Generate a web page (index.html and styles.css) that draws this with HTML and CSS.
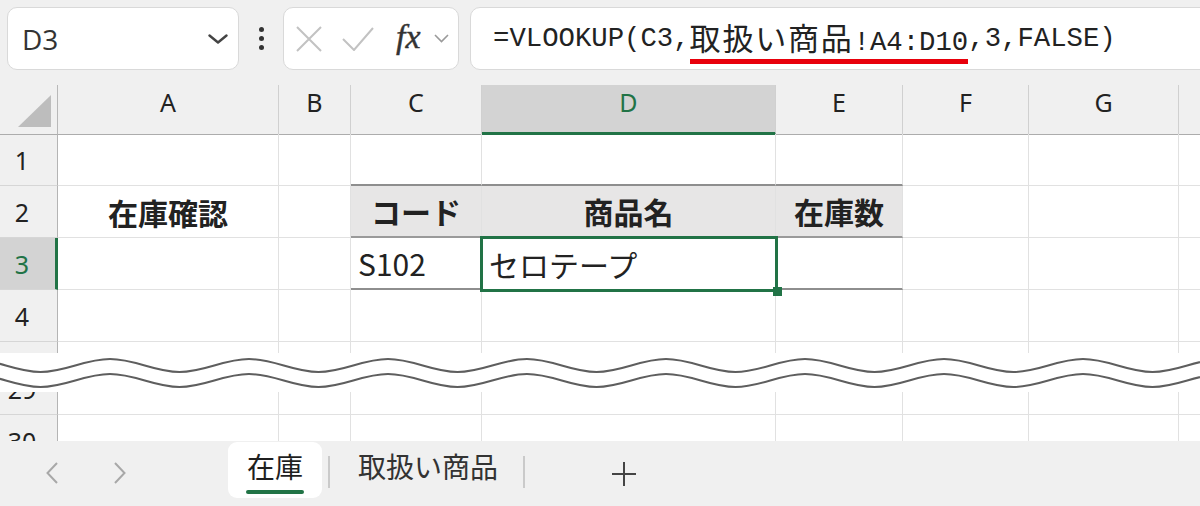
FILE: index.html
```
<!DOCTYPE html>
<html lang="ja">
<head>
  <meta charset="UTF-8">
  <meta name="viewport" content="width=device-width, initial-scale=1.0">
  <title>在庫</title>
  <link rel="stylesheet" href="styles.css">
</head>
<body>

  <div class="toolbar">
    <div class="name-box">
      <span>D3</span>
      <svg class="name-drop" width="20" height="10" viewBox="0 0 20 10"><path d="M1.5 1.5 L10 8.5 L18.5 1.5" fill="none" stroke="#444" stroke-width="2.4" stroke-linecap="round" stroke-linejoin="round"/></svg>
    </div>
    <div class="more">
      <i></i><i></i><i></i>
    </div>
    <div class="fx-box">
      <svg class="fx-cancel" width="26" height="26" viewBox="0 0 26 26"><path d="M1 1 L25 25 M25 1 L1 25" stroke="#c2c2c2" stroke-width="2"/></svg>
      <svg class="fx-enter" width="32" height="24" viewBox="0 0 32 24"><path d="M1 12 L12 23 L31 1" fill="none" stroke="#c2c2c2" stroke-width="2"/></svg>
      <span class="fx">fx</span>
      <svg class="fx-drop" width="15" height="9" viewBox="0 0 15 9"><path d="M1 1 L7.5 7.5 L14 1" fill="none" stroke="#9a9a9a" stroke-width="1.6"/></svg>
    </div>
    <div class="formula">=VLOOKUP(C3,<span class="ref"><span class="jp">取扱い商品</span>!A4:D10</span>,3,FALSE)</div>
  </div>

  <div class="sheet">
    <div class="row col-heads">
      <div class="corner"><span class="corner-mark"></span></div>
      <div>A</div>
      <div>B</div>
      <div>C</div>
      <div class="active">D</div>
      <div>E</div>
      <div>F</div>
      <div>G</div>
      <div></div>
    </div>

    <div class="row">
      <div class="num">1</div>
      <div></div>
      <div></div>
      <div class="tbl-top"></div>
      <div class="tbl-top"></div>
      <div class="tbl-top"></div>
      <div></div>
      <div></div>
      <div></div>
    </div>

    <div class="row">
      <div class="num">2</div>
      <div class="bold center">在庫確認</div>
      <div></div>
      <div class="head-cell bold center">コード</div>
      <div class="head-cell bold center">商品名</div>
      <div class="head-cell bold center">在庫数</div>
      <div></div>
      <div></div>
      <div></div>
    </div>

    <div class="row">
      <div class="num active">3</div>
      <div></div>
      <div></div>
      <div class="tbl-end">S102</div>
      <div class="selected">セロテープ</div>
      <div class="tbl-end"></div>
      <div></div>
      <div></div>
      <div></div>
    </div>

    <div class="row">
      <div class="num">4</div>
      <div></div><div></div><div></div><div></div><div></div><div></div><div></div><div></div>
    </div>

    <div class="row row-cut">
      <div class="num"></div>
      <div></div><div></div><div></div><div></div><div></div><div></div><div></div><div></div>
    </div>

    <div class="row">
      <div class="num">29</div>
      <div></div><div></div><div></div><div></div><div></div><div></div><div></div><div></div>
    </div>

    <div class="row">
      <div class="num">30</div>
      <div></div><div></div><div></div><div></div><div></div><div></div><div></div><div></div>
    </div>

    <!-- rows 5-28 skipped: wavy break mark -->
    <div class="break">
      <svg width="1200" height="39" viewBox="0 0 1200 39">
        <defs>
          <path id="wave" d="M-29 6 C-3.7 6 15.2 19 40.5 19 S84.7 6 110 6 S154.2 19 179.5 19 S223.7 6 249 6 S293.2 19 318.5 19 S362.7 6 388 6 S432.2 19 457.5 19 S501.7 6 527 6 S571.2 19 596.5 19 S640.7 6 666 6 S710.2 19 735.5 19 S779.7 6 805 6 S849.2 19 874.5 19 S918.7 6 944 6 S988.2 19 1013.5 19 S1057.7 6 1083 6 S1127.2 19 1152.5 19 S1196.7 6 1222 6" fill="none" stroke="#5e5e5e" stroke-width="2"/>
        </defs>
        <use href="#wave"/>
        <use href="#wave" y="15"/>
      </svg>
    </div>
  </div>

  <div class="tabs">
    <svg class="nav prev" width="12" height="22" viewBox="0 0 12 22"><path d="M11 1 L1.5 11 L11 21" fill="none" stroke="#a8a8a8" stroke-width="2"/></svg>
    <svg class="nav next" width="12" height="22" viewBox="0 0 12 22"><path d="M1 1 L10.5 11 L1 21" fill="none" stroke="#a8a8a8" stroke-width="2"/></svg>
    <div class="tab current">
      <span class="tab-label">在庫</span>
      <span class="tab-line"></span>
    </div>
    <span class="tab-sep"></span>
    <div class="tab">
      <span class="tab-label">取扱い商品</span>
    </div>
    <span class="tab-sep second"></span>
    <svg class="add" width="24" height="24" viewBox="0 0 24 24"><path d="M12 0 V24 M0 12 H24" stroke="#444" stroke-width="2"/></svg>
  </div>

</body>
</html>
```

FILE: styles.css
```
* {
  box-sizing: border-box;
}
body {
  margin: 0;
  width: 1200px;
  height: 506px;
  overflow: hidden;
  background-color: #f0f0f0;
  font-family: "Noto Sans CJK JP", sans-serif;
  color: #222;
}

/* formula bar */
.toolbar {
  height: 85px;
  display: flex;
  align-items: flex-start;
  padding: 7px 0 0 7px;
}
.name-box, .fx-box, .formula {
  height: 63px;
  background-color: #ffffff;
  border: 1px solid #d9d9d9;
  border-radius: 10px;
  display: flex;
  align-items: center;
}
.name-box {
  width: 232px;
  justify-content: space-between;
  padding: 0 10px 0 14px;
  font-family: "Open Sans", sans-serif;
  font-size: 28px;
  color: #333;
}
.more {
  width: 44px;
  height: 63px;
  display: flex;
  flex-direction: column;
  align-items: center;
  justify-content: center;
  gap: 4px;
}
.more i {
  width: 5px;
  height: 5px;
  border-radius: 50%;
  background-color: #333;
}
.fx-box {
  width: 176px;
  padding-left: 12px;
}
.fx-enter {
  margin-left: 20px;
}
.fx {
  margin-left: 22px;
  font-family: "Liberation Serif", serif;
  font-style: italic;
  font-size: 34px;
  color: #333;
  line-height: 1;
  margin-top: -4px;
  -webkit-text-stroke: 0.4px #333;
}
.fx-drop {
  margin-left: 13px;
}
.formula {
  flex: 1;
  margin-left: 11px;
  margin-right: -20px;
  padding-left: 22px;
  font-family: "Liberation Mono", "Noto Sans CJK JP", monospace;
  font-size: 27.3px;
  color: #222;
  white-space: nowrap;
}
.formula .jp {
  font-size: 31px;
  letter-spacing: 1.8px;
}
.formula .ref {
  border-bottom: 5px solid #e8000b;
}

/* grid */
.sheet {
  position: relative;
  height: 356px;
  overflow: hidden;
  background-color: #ffffff;
}
.row {
  display: grid;
  grid-template-columns: 58px 221px 72px 131px 294px 127px 126px 150px 1fr;
  height: 52px;
  font-size: 30px;
}
.row > div {
  border-right: 1px solid #e1e1e1;
  border-bottom: 1px solid #e1e1e1;
  display: flex;
  align-items: center;
  padding: 0 7px;
  white-space: nowrap;
}
.row > div:last-child {
  border-right: none;
}
.row-cut {
  height: 21px;
}
.bold {
  font-weight: bold;
}
.center {
  justify-content: center;
}

.col-heads {
  height: 49px;
  background-color: #f0f0f0;
  font-family: "Noto Sans", sans-serif;
  font-size: 25px;
}
.col-heads > div {
  justify-content: center;
  padding-bottom: 15px;
  border-right: 1px solid #d0d0d0;
  border-bottom: 1px solid #acacac;
}
.col-heads > div.active {
  background-color: #d3d3d3;
  color: #217346;
  border-bottom: 3px solid #217346;
  padding-bottom: 13px;
}
.col-heads > .corner {
  position: relative;
  border-right-color: #b8b8b8;
}
.corner-mark {
  position: absolute;
  left: 18px;
  top: 10px;
  width: 33px;
  height: 32px;
  background-color: #bdbdbd;
  clip-path: polygon(100% 0, 100% 100%, 0 100%);
}

.row > .num {
  background-color: #f0f0f0;
  justify-content: center;
  padding: 0 13px 0 0;
  font-family: "Noto Sans", sans-serif;
  font-size: 25px;
  border-right: 1px solid #b4b4b4;
  border-bottom: 1px solid #d6d6d6;
}
.row > .num.active {
  background-color: #d3d3d3;
  color: #217346;
  border-right: 3px solid #217346;
  padding-right: 11px;
}

/* table on C2:E3 */
.row > .tbl-top {
  border-bottom: 2px solid #8e8e8e;
}
.row > .head-cell {
  background-color: #e7e6e6;
  border-bottom: 2px solid #9a9a9a;
}
.row > .tbl-end {
  border-bottom: 2px solid #8e8e8e;
}

.selected {
  position: relative;
}
.selected::after {
  content: "";
  position: absolute;
  top: -2px;
  left: -2px;
  right: -3px;
  bottom: -3px;
  border: 3px solid #217346;
}
.selected::before {
  content: "";
  position: absolute;
  right: -7px;
  bottom: -7px;
  width: 9px;
  height: 9px;
  background-color: #217346;
  z-index: 1;
}

.break {
  position: absolute;
  left: 0;
  top: 268px;
  width: 1200px;
  height: 39px;
  background-color: #ffffff;
}
.break svg {
  display: block;
}

/* sheet tabs */
.tabs {
  height: 65px;
  display: flex;
  align-items: flex-start;
  padding-left: 46px;
  background-color: #f0f0f0;
}
.nav {
  margin-top: 21px;
}
.nav.next {
  margin-left: 56px;
}
.tab {
  display: flex;
  flex-direction: column;
  align-items: center;
  font-size: 28px;
  color: #333;
}
.tab-label {
  line-height: 36px;
  margin-top: 7px;
}
.tab.current {
  margin-left: 102px;
  margin-top: 1px;
  width: 94px;
  height: 56px;
  background-color: #ffffff;
  border-radius: 9px;
  color: #1f1f1f;
}
.tab.current .tab-label {
  margin-top: 6px;
}
.tab-line {
  width: 58px;
  height: 4px;
  margin-top: 6px;
  border-radius: 2px;
  background-color: #217346;
}
.tab-sep {
  width: 2px;
  height: 32px;
  margin: 15px 28px 0 6px;
  background-color: #cacaca;
}
.tab-sep.second {
  margin: 15px 0 0 25px;
}
.add {
  margin: 21px 0 0 87px;
}
```
